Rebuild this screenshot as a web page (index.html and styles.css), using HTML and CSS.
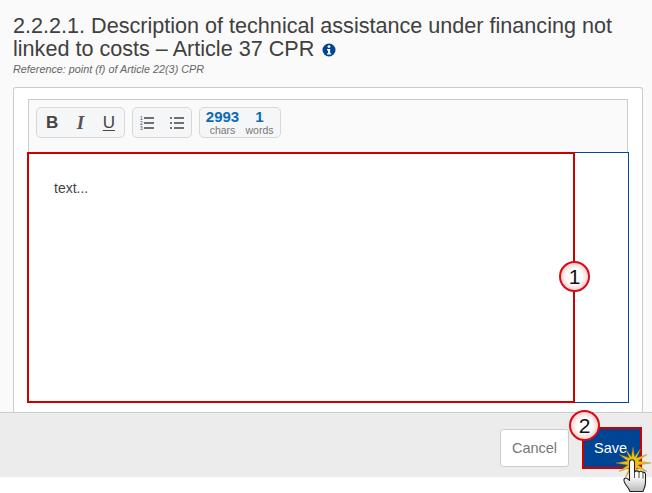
FILE: index.html
```html
<!DOCTYPE html>
<html>
<head>
    <meta charset="UTF-8">
    <title>Description of technical assistance</title>
    <link rel="stylesheet" href="styles.css">
</head>
<body>
    <div class="content">
        <h1 class="title">2.2.2.1. Description of technical assistance under financing not linked to costs – Article 37 CPR
            <svg class="info-icon" width="14" height="14" viewBox="0 0 14 14">
                <circle cx="7" cy="7" r="6.5" fill="#004494"/>
                <circle cx="7" cy="3.6" r="1.4" fill="#fff"/>
                <path d="M5 6h3.2v4.2H9.2v1.4H5v-1.4h1V7.4H5z" fill="#fff"/>
            </svg>
        </h1>
        <div class="reference">Reference: point (f) of Article 22(3) CPR</div>

        <div class="card">
            <div class="editor">
                <div class="toolbar">
                    <div class="tool-group format-group">
                        <span class="tool tool-bold">B</span>
                        <span class="tool tool-italic">I</span>
                        <span class="tool tool-underline">U</span>
                    </div>
                    <div class="tool-group list-group">
                        <svg width="14" height="14" viewBox="0 0 14 14">
                            <text x="0" y="4" class="list-num">1</text>
                            <text x="0" y="9" class="list-num">2</text>
                            <text x="0" y="14" class="list-num">3</text>
                            <path d="M4 2h10M4 7h10M4 12h10" stroke="#444" stroke-width="1.6"/>
                        </svg>
                        <svg width="14" height="14" viewBox="0 0 14 14">
                            <path d="M0 2h2M0 7h2M0 12h2M4 2h10M4 7h10M4 12h10" stroke="#444" stroke-width="1.6"/>
                        </svg>
                    </div>
                    <div class="tool-group count-group">
                        <div class="count"><b>2993</b><span>chars</span></div>
                        <div class="count"><b>1</b><span>words</span></div>
                    </div>
                </div>
                <div class="text-area">
                    <p class="text-value">text...</p>
                </div>
                <div class="highlight-box"></div>
                <div class="badge badge-one">1</div>
            </div>
        </div>
    </div>

    <div class="footer">
        <button class="cancel-button">Cancel</button>
        <div class="save-wrap">
            <button class="save-button">Save</button>
            <div class="badge badge-two">2</div>
            <svg class="click-cursor" width="36" height="46" viewBox="0 0 36 46">
                <defs>
                    <linearGradient id="handShade" x1="0" y1="0" x2="0" y2="1">
                        <stop offset="0.5" stop-color="#fff"/>
                        <stop offset="1" stop-color="#bbb"/>
                    </linearGradient>
                </defs>
                <polygon fill="#f5bd0a" stroke="#9a8420" stroke-width="0.4" points="34,15 21,17 30,23.500 19.500,20 23.500,29 17.500,21 16,31 14.500,21 8.500,29 12.500,20 2,23.500 11,17 -1,15 11,13 2,6.500 12.500,10 8.500,1 14.500,9 16,-1 17.500,9 23.500,1 19.500,10 30,6.500 21,13"/>
                <path fill="url(#handShade)" stroke="#222" stroke-width="1.100" stroke-linejoin="round" d="M12.500 14c0-3 5-3 5 0v10c1.500-1.500 3.500-1.500 4.500 0 1-1.200 3-1 4 .5 1-.8 2.500 0 2.500 2v8c0 4-1.500 6-2.500 9H13c-1-3-3-5-5-8-1-2-1.500-4-.5-5 1-1 3-.5 5 2z"/>
                <path fill="none" stroke="#222" stroke-width="0.800" d="M17.500 24v6M22 24v6M26 24.500v6"/>
            </svg>
        </div>
    </div>
</body>
</html>
```

FILE: styles.css
```css
body {
    margin: 0;
    min-height: 493px;
    background-color: #fff;
    font-family: "Liberation Sans", Arial, sans-serif;
    color: #404040;
}
.content {
    height: 412px;
    box-sizing: border-box;
    padding: 14px 9px 0 13px;
    background-color: #fafafa;
    overflow: hidden;
}
.title {
    margin: 0;
    font-size: 21.6px;
    font-weight: normal;
    line-height: 23px;
}
.info-icon {
    margin-left: 2px;
    vertical-align: -1px;
}
.reference {
    margin-top: 3px;
    font-size: 10.8px;
    line-height: 12px;
    font-style: italic;
    color: #666;
}
.card {
    margin-top: 12px;
    height: 340px;
    box-sizing: border-box;
    padding: 11px 14px 0 14px;
    background-color: #fff;
    border: 1px solid #ccc;
    border-bottom: none;
    border-radius: 3px 3px 0 0;
}
.editor {
    position: relative;
}
.toolbar {
    display: flex;
    gap: 7px;
    height: 53px;
    box-sizing: border-box;
    padding: 7px;
    background-color: #fafafa;
    border: 1px solid #ccc;
    border-bottom: none;
}
.tool-group {
    display: flex;
    align-items: center;
    height: 31px;
    box-sizing: border-box;
    background-color: #f5f6f8;
    border: 1px solid #d8d8d8;
    border-radius: 5px;
}
.format-group {
    width: 89px;
    justify-content: space-between;
    padding: 0 9px;
}
.tool {
    font-size: 17px;
    color: #444;
}
.tool-bold {
    font-weight: bold;
}
.tool-italic {
    font-family: "Liberation Serif", serif;
    font-size: 19px;
    font-style: italic;
    font-weight: bold;
    color: #555;
}
.tool-underline {
    text-decoration: underline;
    text-underline-offset: 2px;
}
.list-group {
    width: 60px;
    justify-content: space-between;
    padding: 0 7px;
}
.list-num {
    font-size: 5px;
    fill: #444;
}
.count-group {
    width: 82px;
    justify-content: space-between;
    padding: 0 3px 0 5px;
}
.count {
    display: flex;
    flex-direction: column;
    align-items: center;
    width: 35px;
}
.count b {
    font-size: 15px;
    line-height: 14px;
    color: #0a6ab4;
}
.count span {
    font-size: 10.5px;
    line-height: 12px;
    color: #777;
}
.text-area {
    height: 251px;
    box-sizing: border-box;
    margin-right: -1px;
    padding: 27px 25px;
    background-color: #fff;
    border: 1px solid #00479d;
}
.text-value {
    margin: 0;
    font-size: 14px;
    line-height: 16px;
    color: #444;
}
.highlight-box {
    position: absolute;
    left: -1px;
    top: 53px;
    width: 548px;
    height: 251px;
    box-sizing: border-box;
    border: 2px solid #cc0000;
}
.badge {
    position: absolute;
    width: 31px;
    height: 31px;
    box-sizing: border-box;
    border: 2px solid #d80a14;
    border-radius: 50%;
    background: radial-gradient(circle, #fff 40%, #fbd5d5 68%, #f07a7a 100%);
    font-size: 21px;
    line-height: 27px;
    text-align: center;
    color: #111;
}
.badge-one {
    left: 531px;
    top: 162px;
}
.footer {
    display: flex;
    justify-content: flex-end;
    align-items: center;
    gap: 13px;
    height: 65px;
    box-sizing: border-box;
    padding: 5px 10px 0 0;
    background-color: #ececec;
    border-top: 1px solid #ccc;
}
.cancel-button {
    width: 69px;
    height: 38px;
    background-color: #fff;
    border: 1px solid #ccc;
    border-radius: 3px;
    font-family: inherit;
    font-size: 14.5px;
    color: #777;
}
.save-wrap {
    position: relative;
}
.save-button {
    display: block;
    width: 60px;
    height: 42px;
    padding: 0 3px 0 0;
    background-color: #004494;
    border: 2px solid #cc0000;
    font-family: inherit;
    font-size: 14.5px;
    color: #fff;
}
.badge-two {
    left: -13px;
    top: -17px;
}
.click-cursor {
    position: absolute;
    left: 35px;
    top: 21px;
    overflow: visible;
}
```
